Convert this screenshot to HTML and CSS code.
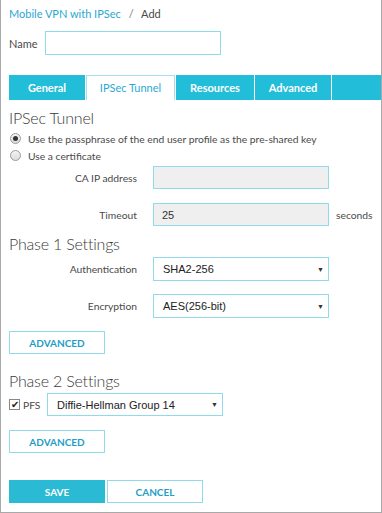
FILE: index.html
```
<!DOCTYPE html>
<html lang="en">
<head>
    <meta charset="UTF-8">
    <meta name="viewport" content="width=device-width, initial-scale=1.0">
    <title>Mobile VPN with IPSec - Add</title>
    <link rel="stylesheet" href="styles.css">
</head>
<body>
    <div class="page">
        <div class="crumbs">
            <a href="#">Mobile VPN with IPSec</a>
            <span class="sep">/</span>
            <span>Add</span>
        </div>

        <div class="name-row">
            <label for="name">Name</label>
            <input type="text" id="name" class="text-input name-input">
        </div>

        <!-- Tabs -->
        <div class="tabs">
            <div class="tab tab-general">General</div>
            <div class="tab tab-ipsec active">IPSec Tunnel</div>
            <div class="tab tab-resources">Resources</div>
            <div class="tab tab-advanced">Advanced</div>
            <div class="tab tab-rest"></div>
        </div>

        <h2 class="section-title first">IPSec Tunnel</h2>
        <div class="radios">
            <div class="radio-row"><span class="radio checked"></span>Use the passphrase of the end user profile as the pre-shared key</div>
            <div class="radio-row"><span class="radio"></span>Use a certificate</div>
        </div>

        <div class="field field-ca">
            <label>CA IP address</label>
            <input type="text" class="text-input grey-input" disabled>
        </div>
        <div class="field field-timeout">
            <label>Timeout</label>
            <input type="text" class="text-input grey-input" value="25" disabled>
            <span class="unit">seconds</span>
        </div>

        <h2 class="section-title">Phase 1 Settings</h2>
        <div class="field field-auth">
            <label>Authentication</label>
            <div class="select">SHA2-256<span class="caret">&#9660;</span></div>
        </div>
        <div class="field field-enc">
            <label>Encryption</label>
            <div class="select">AES(256-bit)<span class="caret">&#9660;</span></div>
        </div>
        <button class="btn btn-outline adv-1">ADVANCED</button>

        <h2 class="section-title phase2">Phase 2 Settings</h2>
        <div class="pfs-row">
            <span class="check">&#10004;</span>
            <span class="pfs-label">PFS</span>
            <div class="select pfs-select">Diffie-Hellman Group 14<span class="caret">&#9660;</span></div>
        </div>
        <button class="btn btn-outline adv-2">ADVANCED</button>

        <div class="actions">
            <button class="btn btn-primary">SAVE</button>
            <button class="btn btn-outline">CANCEL</button>
        </div>
    </div>
</body>
</html>
```
FILE: styles.css
```
body {
    margin: 0;
    background-color: white;
    font-family: Lato, "Open Sans", sans-serif;
    font-size: 10.3px;
    color: #4a4a4a;
}
.page {
    width: 382px;
    height: 513px;
    box-sizing: border-box;
    border: 1px solid #a9a9a9;
    border-top: none;
    padding-left: 8px;
}
.crumbs {
    padding-top: 7px;
    line-height: 14px;
    font-size: 11px;
}
.crumbs a {
    color: #2ba8d2;
    text-decoration: none;
}
.crumbs .sep {
    margin: 0 5px;
    color: #777;
}
.name-row {
    display: flex;
    align-items: center;
    margin-top: 10px;
    font-size: 11px;
}
.name-row label {
    width: 36px;
}
.text-input {
    box-sizing: border-box;
    height: 24px;
    border: 1px solid #8fdbeb;
    outline: none;
    padding: 0 8px;
    font-family: "Liberation Sans", Arial, sans-serif;
    font-size: 11px;
    color: #333;
    background: white;
}
.name-input {
    width: 176px;
}
.tabs {
    display: flex;
    margin-top: 20px;
    height: 25px;
}
.tab {
    box-sizing: border-box;
    height: 25px;
    line-height: 25px;
    margin-right: 1px;
    background-color: #22bdd8;
    color: white;
    font-size: 11px;
    font-weight: bold;
    text-align: center;
}
.tab-general { width: 76px; }
.tab-ipsec { width: 89px; }
.tab-resources { width: 78px; }
.tab-advanced { width: 76px; }
.tab-rest { flex: 1; margin-right: 0; }
.tab.active {
    background-color: white;
    color: #2ba8d2;
    font-weight: normal;
    border: 1px solid #a6e0ee;
    border-bottom: none;
    line-height: 24px;
}
.section-title {
    margin: 8px 0 0;
    font-size: 16px;
    font-weight: 300;
    letter-spacing: -0.2px;
    line-height: 20px;
    color: #3a3a3a;
}
.section-title.phase2 {
    margin-top: 17px;
}
.radios {
    margin-top: 2px;
}
.radio-row {
    display: flex;
    align-items: center;
    height: 17px;
}
.radio {
    box-sizing: border-box;
    width: 11px;
    height: 11px;
    border: 1px solid #9a9a9a;
    border-radius: 50%;
    background: linear-gradient(#f4f4f4, #dcdcdc);
    margin: 0 7px 0 1px;
    position: relative;
}
.radio.checked::after {
    content: "";
    position: absolute;
    left: 2px;
    top: 2px;
    width: 5px;
    height: 5px;
    border-radius: 50%;
    background: #333;
}
.field {
    display: flex;
    align-items: center;
}
.field label {
    width: 128px;
    text-align: right;
    margin-right: 16px;
}
.field-ca { margin-top: 2px; }
.field-timeout { margin-top: 14px; }
.field-auth { margin-top: 3px; }
.field-enc { margin-top: 13px; }
.grey-input {
    width: 176px;
    height: 23px;
    background: #efefef;
}
.unit {
    margin-left: 7px;
}
.select {
    box-sizing: border-box;
    width: 176px;
    height: 24px;
    border: 1px solid #8fdbeb;
    padding: 0 4px 0 9px;
    display: flex;
    align-items: center;
    justify-content: space-between;
    font-family: "Liberation Sans", Arial, sans-serif;
    font-size: 11px;
    color: #222;
}
.caret {
    font-size: 7px;
    color: #333;
}
.btn {
    box-sizing: border-box;
    width: 96px;
    height: 23px;
    font-family: Lato, "Open Sans", sans-serif;
    font-size: 10px;
    font-weight: bold;
    cursor: pointer;
    display: block;
}
.btn-outline {
    background: white;
    border: 1px solid #8fdbeb;
    color: #1f9dc6;
}
.btn-primary {
    background: #2bbad4;
    border: 1px solid #2bbad4;
    color: white;
}
.adv-1 { margin-top: 13px; }
.adv-2 { margin-top: 14px; }
.pfs-row {
    display: flex;
    align-items: center;
    margin-top: 2px;
}
.check {
    box-sizing: border-box;
    width: 11px;
    height: 11px;
    border: 1px solid #888;
    font-size: 10px;
    line-height: 9px;
    text-align: center;
    color: #222;
    margin-right: 3px;
}
.pfs-label {
    width: 24px;
}
.pfs-select {
    height: 23px;
}
.actions {
    display: flex;
    gap: 2px;
    margin-top: 27px;
}
```
